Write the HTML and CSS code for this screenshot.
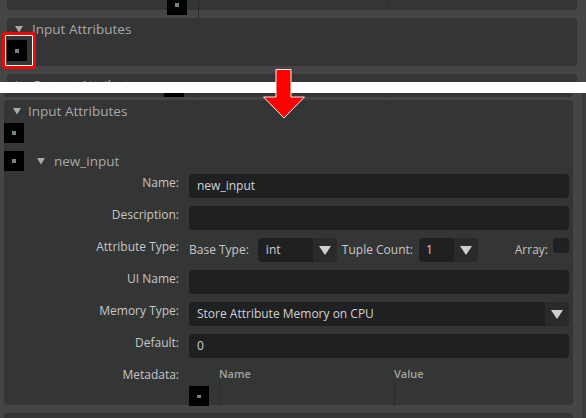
FILE: index.html
```html
<!DOCTYPE html>
<html>
<head>
<meta charset="utf-8">
<link rel="stylesheet" href="styles.css">
</head>
<body>
<div class="shot top">
  <div class="panel stub stub-top">
    <div class="blk blk-up"><span class="dot"></span></div>
    <div class="vline vline-top"></div>
    <div class="vline vline-top2"></div>
  </div>
  <div class="panel sec sec-open">
    <div class="hdr">
      <svg class="tri" width="8" height="7" viewBox="0 0 8 7"><polygon points="0,0 8,0 4,6.5"/></svg>
      <span class="hdr-text">Input Attributes</span>
    </div>
    <div class="blk blk-tall"><span class="dot"></span></div>
  </div>
  <div class="panel sec">
    <div class="hdr">
      <svg class="tri" width="8" height="8" viewBox="0 0 8 8"><polygon points="1,0 7,4 1,8"/></svg>
      <span class="hdr-text">Output Attributes</span>
    </div>
  </div>
</div>
<div class="band"></div>
<div class="shot bottom">
  <div class="panel stub stub-bot">
    <div class="blk blk-up2"><span class="dot"></span></div>
    <div class="vline vl1"></div>
    <div class="vline vl2"></div>
  </div>
  <div class="panel main">
    <div class="hdr hdr-main">
      <svg class="tri" width="8" height="7" viewBox="0 0 8 7"><polygon points="0,0 8,0 4,6.5"/></svg>
      <span class="hdr-text">Input Attributes</span>
    </div>
    <div class="row-blk first"><div class="blk"><span class="dot"></span></div></div>
    <div class="row-blk second">
      <div class="blk"><span class="dot"></span></div>
      <svg class="tri tri-node" width="8" height="7" viewBox="0 0 8 7"><polygon points="0,0 8,0 4,6.5"/></svg>
      <span class="node-text">new_input</span>
    </div>
    <div class="form">
      <div class="lbl">Name:</div>
      <div class="field">new_input</div>

      <div class="lbl">Description:</div>
      <div class="field"></div>

      <div class="lbl">Attribute Type:</div>
      <div class="attr-row">
        <span class="sub-lbl">Base Type:</span>
        <div class="combo combo-base"><span class="combo-val">int</span><span class="combo-btn"><svg width="12" height="9" viewBox="0 0 12 9"><polygon points="0,0 12,0 6,9"/></svg></span></div>
        <span class="sub-lbl tuple-lbl">Tuple Count:</span>
        <div class="combo combo-tuple"><span class="combo-val">1</span><span class="combo-btn"><svg width="12" height="9" viewBox="0 0 12 9"><polygon points="0,0 12,0 6,9"/></svg></span></div>
        <span class="spacer"></span>
        <span class="sub-lbl">Array:</span>
        <span class="check"></span>
      </div>

      <div class="lbl">UI Name:</div>
      <div class="field"></div>

      <div class="lbl">Memory Type:</div>
      <div class="combo combo-mem"><span class="combo-val">Store Attribute Memory on CPU</span><span class="combo-btn"><svg width="12" height="9" viewBox="0 0 12 9"><polygon points="0,0 12,0 6,9"/></svg></span></div>

      <div class="lbl">Default:</div>
      <div class="field">0</div>

      <div class="lbl">Metadata:</div>
      <div class="meta">
        <div class="meta-c0"><div class="blk blk-meta"><span class="dot dash"></span></div></div>
        <div class="meta-col meta-c1"><div class="th">Name</div><div class="td"></div></div>
        <div class="meta-col"><div class="th">Value</div><div class="td"></div></div>
      </div>
    </div>
  </div>
  <div class="panel next"></div>
</div>

<div class="highlight"></div>
<svg class="arrow" width="586" height="130" viewBox="0 0 586 130">
  <polygon points="276,69.5 291,69.5 291,97 304.5,97 284,118 263.5,97 276,97" fill="#ff0000" stroke="#f2f2f2" stroke-width="1"/>
</svg>
</body>
</html>
```

FILE: styles.css
```css
* { box-sizing: border-box; }
html, body { margin: 0; padding: 0; }
body {
  width: 586px;
  height: 418px;
  overflow: hidden;
  background: #454545;
  font-family: "Open Sans", "DejaVu Sans", sans-serif;
  position: relative;
}
.shot { overflow: hidden; }
.top { height: 82px; padding-left: 7px; }
.bottom {
  height: 325px;
  padding-left: 4px;
  background: linear-gradient(to right, #454545 0, #454545 582px, #3b3b3b 582px);
}
.panel { background: #343535; border-radius: 4px; }
.top .panel { width: 570px; }
.bottom .panel { width: 569px; }

.stub { display: flex; align-items: flex-start; border-radius: 0 0 4px 4px; }
.stub-top { height: 10px; }
.stub-bot { height: 4px; }

.blk {
  width: 20px;
  height: 20px;
  background: #000;
  display: flex;
  align-items: center;
  justify-content: center;
  flex: none;
}
.dot { width: 4px; height: 4px; background: #74858a; }
.dot.dash { height: 3px; }
.blk-up { margin-left: 160px; margin-top: -5px; }
.blk-up2 { margin-left: 160px; margin-top: -16px; }
.vline { width: 1px; background: #2a2b2b; flex: none; }
.vline-top { margin-left: 11px; height: 18px; }
.vline-top2 { margin-left: 189px; height: 10px; }
.vl1 { margin-left: 10px; height: 4px; }
.vl2 { margin-left: 189px; height: 4px; }

.sec { margin-top: 8px; height: 60px; padding-top: 2px; }
.sec-open { height: 48px; }
.hdr { display: flex; align-items: center; height: 18px; padding-left: 8px; }
.tri { fill: #a9a9a9; flex: none; }
.hdr-text {
  margin-left: 9px;
  font-size: 13.5px;
  line-height: 18px;
  color: #a9a9a9;
  white-space: nowrap;
}
.blk-tall { margin-top: 2px; height: 21px; }

.band { height: 11px; background: #ffffff; }

.main { margin-top: 3px; height: 305px; padding: 2px 4px 0 0; }
.hdr-main { padding-left: 9px; }
.hdr-main .hdr-text { margin-left: 7px; }
.row-blk { display: flex; align-items: center; height: 20px; }
.row-blk.first { margin-top: 3px; }
.row-blk.second { margin-top: 8px; }
.tri-node { margin-left: 13px; }
.node-text {
  margin-left: 9px;
  font-size: 13.5px;
  color: #a9a9a9;
  line-height: 18px;
}

.form {
  margin-top: 3px;
  display: grid;
  grid-template-columns: 175px 1fr;
  column-gap: 10px;
  row-gap: 8px;
}
.lbl {
  text-align: right;
  font-size: 12px;
  line-height: 18px;
  color: #c6c6c6;
  white-space: nowrap;
}
.field {
  height: 24px;
  background: #1f2022;
  border-radius: 4px;
  padding-left: 8px;
  font-size: 12px;
  line-height: 24px;
  color: #d2d2d2;
}
.attr-row { display: flex; align-items: center; height: 24px; }
.sub-lbl { font-size: 12px; color: #c6c6c6; white-space: nowrap; line-height: 24px; }
.combo {
  display: flex;
  height: 24px;
  background: #1f2022;
  border-radius: 4px;
  overflow: hidden;
  flex: none;
}
.combo-val {
  flex: 1;
  padding-left: 8px;
  font-size: 12px;
  line-height: 24px;
  color: #d2d2d2;
  white-space: nowrap;
}
.combo-btn {
  width: 24px;
  background: #292a2c;
  display: flex;
  align-items: center;
  justify-content: center;
  fill: #d0d0d0;
}
.combo-base { width: 79px; margin-left: 9px; }
.tuple-lbl { margin-left: 5px; }
.combo-tuple { width: 59px; margin-left: 6px; }
.combo-tuple .combo-val { padding-left: 7px; }
.spacer { flex: 1; }
.check {
  width: 16px;
  height: 15px;
  margin-left: 5px;
  align-self: flex-start;
  background: #1f2022;
  border-radius: 3px;
}
.combo-mem { width: auto; }

.meta { display: flex; height: 40px; }
.meta-c0 { width: 30px; padding-top: 20px; }
.meta-col { display: flex; flex-direction: column; }
.meta-c1 { width: 175px; }
.th {
  height: 14px;
  font-size: 11px;
  font-weight: 600;
  line-height: 16px;
  color: #a3a3a3;
  white-space: nowrap;
}
.td { flex: 1; border-left: 1px solid #2a2b2b; height: 40px; }

.next { margin-top: 8px; height: 20px; }

.highlight {
  position: absolute;
  left: 2px;
  top: 32px;
  width: 34px;
  height: 37px;
  border: 3px solid #ff0000;
  border-radius: 4px;
  box-shadow: inset 0 0 0 1px #ffffff;
}
.arrow { position: absolute; left: 0; top: 0; }
```
